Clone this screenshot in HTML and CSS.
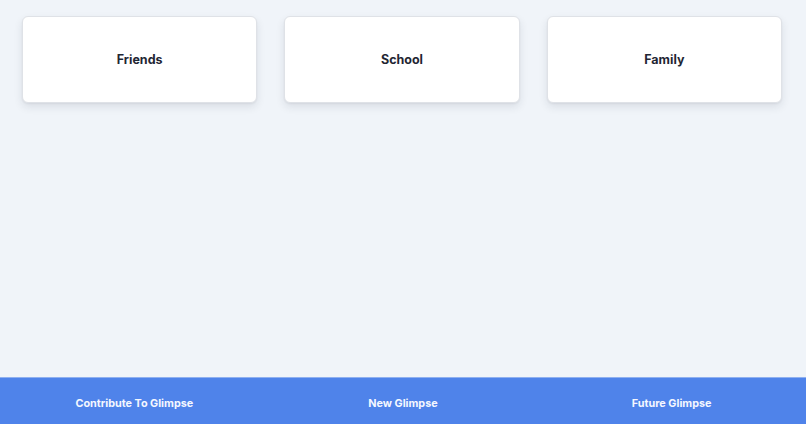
FILE: index.html
```html
<!DOCTYPE html>
<html>
<head>
<meta charset="utf-8">
<link rel="stylesheet" href="styles.css">
</head>
<body>
<div class="page">
  <main class="cards">
    <div class="card">Friends</div>
    <div class="card">School</div>
    <div class="card">Family</div>
  </main>
  <footer class="footer">
    <a class="footer-link">Contribute To Glimpse</a>
    <a class="footer-link">New Glimpse</a>
    <a class="footer-link">Future Glimpse</a>
  </footer>
</div>
</body>
</html>
```
FILE: styles.css
```css
html, body {
  margin: 0;
  padding: 0;
  height: 100%;
}
body {
  background: #f0f4f9;
  font-family: Inter, "Noto Sans", sans-serif;
}
.page {
  min-height: 100vh;
  display: flex;
  flex-direction: column;
}
.cards {
  flex: 1;
  display: grid;
  grid-template-columns: repeat(3, 1fr);
  column-gap: 27px;
  padding: 16px 24px 0 22px;
  align-content: start;
}
.card {
  height: 85px;
  background: #ffffff;
  border: 1px solid #dfe2e7;
  border-radius: 6px;
  box-shadow: 0 4px 8px rgba(30, 41, 59, 0.10), 0 1px 2px rgba(30, 41, 59, 0.06);
  display: flex;
  align-items: center;
  justify-content: center;
  font-size: 12.5px;
  font-weight: 700;
  color: #1f2633;
}
.footer {
  height: 41px;
  padding-top: 5px;
  background: #4f83ea;
  border-top: 1px solid #8fb0f0;
  display: grid;
  grid-template-columns: repeat(3, 1fr);
  align-items: center;
}
.footer-link {
  text-align: center;
  color: #f4f7ff;
  font-size: 10.8px;
  font-weight: 700;
}
```
